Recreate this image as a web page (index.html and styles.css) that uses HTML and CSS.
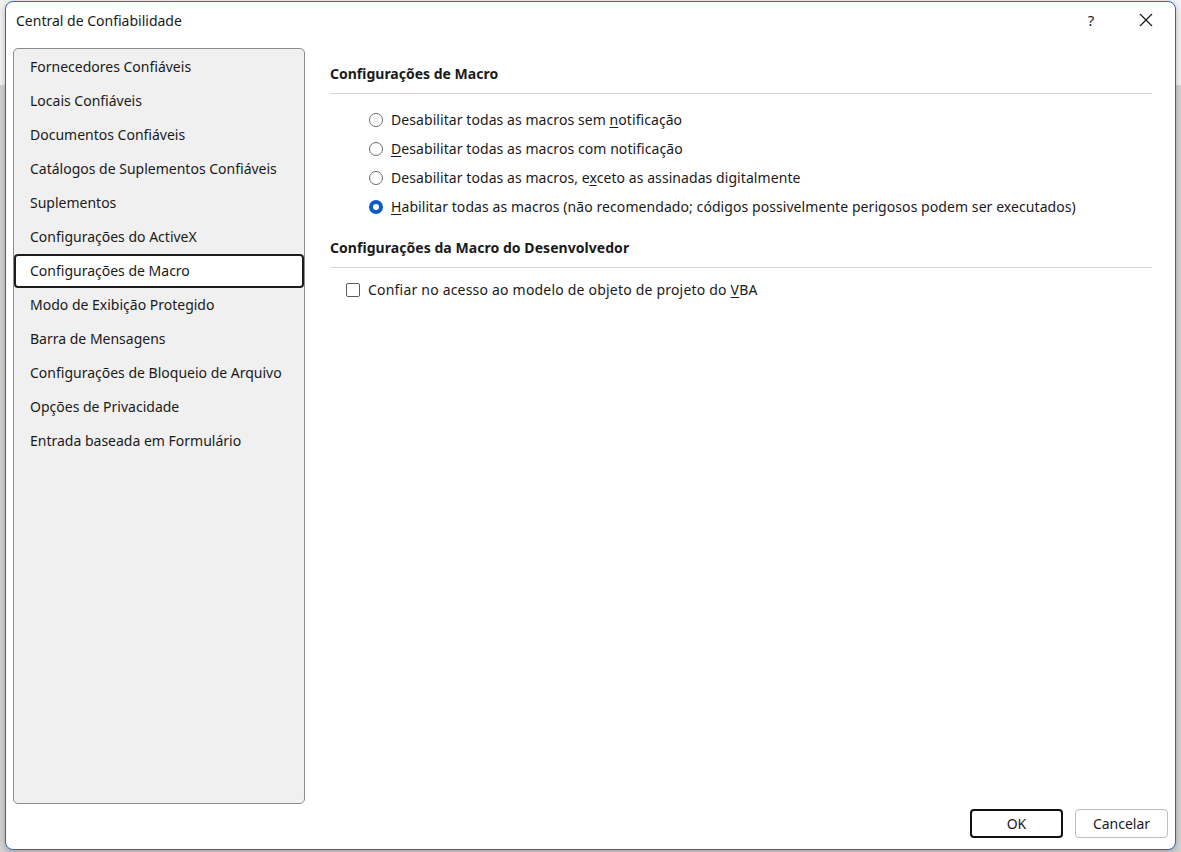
FILE: index.html
```html
<!DOCTYPE html>
<html lang="pt-BR">
<head>
<meta charset="utf-8">
<title>Central de Confiabilidade</title>
<link rel="stylesheet" href="styles.css">
</head>
<body>
<div class="backdrop">
  <div class="dialog">
    <div class="titlebar">
      <span class="title">Central de Confiabilidade</span>
      <div class="title-actions">
        <span class="help">?</span>
        <span class="close">
          <svg width="14" height="14" viewBox="0 0 14 14"><path d="M1 1 L13 13 M13 1 L1 13" stroke="#1a1a1a" stroke-width="1.2" fill="none"/></svg>
        </span>
      </div>
    </div>
    <div class="main">
      <nav class="sidebar">
        <div class="nav-item">Fornecedores Confiáveis</div>
        <div class="nav-item">Locais Confiáveis</div>
        <div class="nav-item">Documentos Confiáveis</div>
        <div class="nav-item">Catálogos de Suplementos Confiáveis</div>
        <div class="nav-item">Suplementos</div>
        <div class="nav-item">Configurações do ActiveX</div>
        <div class="nav-item selected">Configurações de Macro</div>
        <div class="nav-item">Modo de Exibição Protegido</div>
        <div class="nav-item">Barra de Mensagens</div>
        <div class="nav-item">Configurações de Bloqueio de Arquivo</div>
        <div class="nav-item">Opções de Privacidade</div>
        <div class="nav-item">Entrada baseada em Formulário</div>
      </nav>
      <section class="content">
        <h2 class="section-title">Configurações de Macro</h2>
        <div class="options">
          <label class="option"><span class="radio"></span><span>Desabilitar todas as macros sem <u>n</u>otificação</span></label>
          <label class="option"><span class="radio"></span><span><u>D</u>esabilitar todas as macros com notificação</span></label>
          <label class="option"><span class="radio"></span><span>Desabilitar todas as macros, e<u>x</u>ceto as assinadas digitalmente</span></label>
          <label class="option"><span class="radio checked"></span><span><u>H</u>abilitar todas as macros (não recomendado; códigos possivelmente perigosos podem ser executados)</span></label>
        </div>
        <h2 class="section-title second">Configurações da Macro do Desenvolvedor</h2>
        <div class="checks">
          <label class="check-option"><span class="checkbox"></span><span>Confiar no acesso ao modelo de objeto de projeto do <u>V</u>BA</span></label>
        </div>
      </section>
    </div>
    <div class="footer">
      <button class="btn primary">OK</button>
      <button class="btn">Cancelar</button>
    </div>
  </div>
</div>
</body>
</html>
```

FILE: styles.css
```css
* { box-sizing: border-box; }
html, body { margin: 0; padding: 0; }
body {
  width: 1181px;
  height: 852px;
  overflow: hidden;
  font-family: "Noto Sans", "Open Sans", sans-serif;
  font-size: 14px;
  color: #1a1a1a;
  background: linear-gradient(#f2f2f2 0, #f2f2f2 85px, #d3d3d3 85px, #d3d3d3 100%);
}
.backdrop {
  padding: 1px 5px 2px 5px;
  height: 852px;
}
.dialog {
  width: 1171px;
  height: 849px;
  background: #fff;
  border: 1px solid #2a67c9;
  border-radius: 8px;
  display: flex;
  flex-direction: column;
  box-shadow: 0 2px 6px rgba(0,0,0,0.25);
}
.titlebar {
  height: 36px;
  display: flex;
  align-items: center;
  justify-content: space-between;
  padding-left: 10px;
}
.title { font-size: 14px; }
.title-actions {
  display: flex;
  align-items: center;
  height: 36px;
}
.help {
  font-size: 15px;
  width: 30px;
  text-align: center;
  margin-right: 33px;
}
.close {
  width: 16px;
  display: flex;
  align-items: center;
  margin-right: 20px;
}
.main {
  flex: 1;
  margin-top: 10px;
  display: flex;
  padding-left: 7px;
  padding-right: 23px;
  min-height: 0;
}
.sidebar {
  width: 292px;
  height: 756px;
  background: #f0f0f0;
  border: 1px solid #8c8c8c;
  border-radius: 5px;
  padding-top: 1px;
  display: flex;
  flex-direction: column;
}
.nav-item {
  height: 34px;
  line-height: 30px;
  padding-left: 14px;
  font-size: 14px;
  white-space: nowrap;
  border: 2px solid transparent;
  border-radius: 4px;
  flex: none;
}
.nav-item.selected {
  background: #fff;
  border-color: #1c1c1c;
}
.content {
  flex: 1;
  margin-left: 25px;
  padding-top: 16px;
}
.section-title {
  margin: 0;
  font-size: 14px;
  font-weight: 700;
  line-height: 20px;
  padding-bottom: 9px;
  border-bottom: 1px solid #d5d5d5;
}
.section-title.second { margin-top: 17px; letter-spacing: 0.05px; }
.options {
  padding-top: 11px;
  display: flex;
  flex-direction: column;
}
.option {
  height: 29px;
  display: flex;
  align-items: center;
  padding-left: 39px;
  gap: 8px;
  white-space: nowrap;
  letter-spacing: 0.07px;
}
.radio {
  width: 14px;
  height: 14px;
  border-radius: 50%;
  border: 1px solid #6b6b6b;
  background: #fff;
  flex: none;
}
.radio.checked {
  border: 4px solid #0f5bc4;
}
.checks {
  padding-top: 7px;
}
.check-option {
  height: 29px;
  display: flex;
  align-items: center;
  padding-left: 16px;
  gap: 8px;
  white-space: nowrap;
  letter-spacing: 0.2px;
}
.checkbox {
  width: 14px;
  height: 14px;
  border: 1px solid #5c5c5c;
  border-radius: 2px;
  background: #fff;
  flex: none;
}
u { text-underline-offset: 2px; }
.footer {
  height: 45px;
  display: flex;
  justify-content: flex-end;
  gap: 12px;
  padding: 5px 7px 11px 0;
}
.btn {
  width: 93px;
  height: 29px;
  font-family: inherit;
  font-size: 14px;
  color: #1a1a1a;
  background: #fff;
  border: 1px solid #bdbdbd;
  border-radius: 4px;
  padding: 0;
}
.btn.primary {
  border: 2px solid #111;
}
```
